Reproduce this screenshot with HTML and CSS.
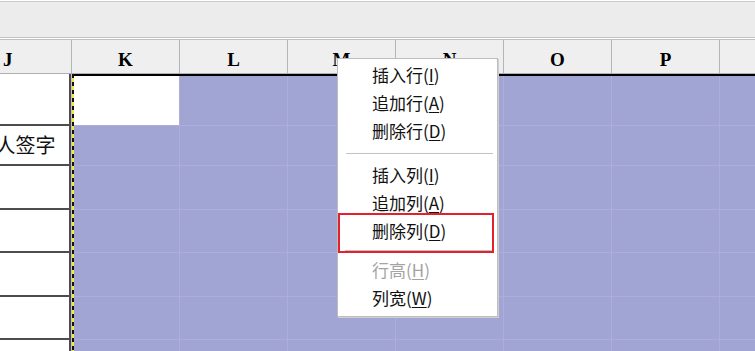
FILE: index.html
```html
<!DOCTYPE html>
<html lang="zh-CN">
<head>
  <meta charset="UTF-8" />
  <title>表格 • 列操作</title>
  <link rel="stylesheet" href="styles.css">
</head>
<body>
  <div class="toolbar"></div>

  <div class="view">
    <!-- column headers -->
    <div class="head">
      <div class="hcell hcell-j">J</div>
      <div class="hcell">K</div>
      <div class="hcell">L</div>
      <div class="hcell">M</div>
      <div class="hcell">N</div>
      <div class="hcell">O</div>
      <div class="hcell">P</div>
      <div class="hcell"></div>
    </div>

    <div class="sheet">
      <div class="col-j">
        <div class="jcell r1"></div>
        <div class="jcell r2">检验人签字</div>
        <div class="jcell r3"></div>
        <div class="jcell r4"></div>
        <div class="jcell r5"></div>
        <div class="jcell r6"></div>
        <div class="jcell r7"></div>
      </div>
      <div class="sel">
        <div class="grid" id="grid"></div>
      </div>
    </div>
  </div>

  <!-- context menu -->
  <div class="menu">
    <div class="item">插入行(<u>I</u>)</div>
    <div class="item">追加行(<u>A</u>)</div>
    <div class="item">删除行(<u>D</u>)</div>
    <div class="sep"></div>
    <div class="item">插入列(<u>I</u>)</div>
    <div class="item">追加列(<u>A</u>)</div>
    <div class="item">删除列(<u>D</u>)</div>
    <div class="sep sep-tight"></div>
    <div class="item disabled">行高(<u>H</u>)</div>
    <div class="item">列宽(<u>W</u>)</div>
    <div class="mark"></div>
  </div>

  <script>
    // fill the selected range: 7 columns x 7 rows, K1 is the active cell
    const grid = document.getElementById('grid');
    for (let r = 0; r < 7; r++) {
      for (let c = 0; c < 7; c++) {
        const d = document.createElement('div');
        d.className = (r === 0 && c === 0) ? 'cell active' : 'cell';
        grid.appendChild(d);
      }
    }
  </script>
</body>
</html>
```

FILE: styles.css
```css
:root {
  --bar-bg: #ececec;
  --head-bg: #efefef;
  --head-line: #b5b5b5;
  --sel-bg: #a1a5d3;
  --sel-line: #b1ace0;
  --cell-line: #4d4d4d;
  --menu-line: #bdbdbd;
  --mark: #e3202b;
}
* { box-sizing: border-box; margin: 0; padding: 0; }
html, body { width: 755px; height: 351px; overflow: hidden; }
body { background: #fff; font-family: "Noto Sans CJK SC", sans-serif; position: relative; }

.toolbar {
  margin-top: 1px;
  height: 37px;
  background: var(--bar-bg);
  border-top: 1px solid #cacaca;
  border-bottom: 1px solid #c2c2c2;
}

.view { margin-top: 1px; overflow: hidden; }

.head {
  display: grid;
  grid-template-columns: 130px repeat(7, 108px);
  margin-left: -58px;
  height: 35px;
  background: var(--head-bg);
  border-top: 1px solid #c0c0c0;
  border-bottom: 1px solid #b0b0b0;
}
.hcell {
  border-right: 1px solid var(--head-line);
  font-family: "Liberation Serif", serif;
  font-weight: bold;
  font-size: 19px;
  line-height: 20px;
  text-align: center;
  padding-top: 10px;
  color: #000;
}
.hcell-j { text-align: left; padding-left: 61px; }

.sheet { display: flex; margin-left: -58px; }
.col-j { width: 130px; flex: none; background: #c4c4c4; }
.jcell {
  width: 129px;
  background: #fff;
  border-right: 2px solid var(--cell-line);
  border-bottom: 2px solid var(--cell-line);
  font-size: 20px;
  color: #111;
  text-align: center;
  line-height: 38px;
  white-space: nowrap;
}
.r1 { height: 52px; }
.r2 { height: 40px; }
.r3 { height: 44px; }
.r4 { height: 43px; }
.r5 { height: 44px; }
.r6 { height: 43px; }
.r7 { height: 44px; }

.sel { flex: 1; position: relative; border-top: 2px solid #000; background: var(--sel-bg); }
.sel::before {
  content: "";
  position: absolute;
  left: 0; top: -2px; bottom: 0;
  width: 2px;
  background: repeating-linear-gradient(to bottom, #111 0 4px, #f5e83a 4px 8px);
  z-index: 2;
}
.grid {
  display: grid;
  grid-template-columns: repeat(7, 108px);
  grid-template-rows: 50px 40px 44px 43px 44px 43px 44px;
}
.cell { border-right: 1px solid var(--sel-line); border-bottom: 1px solid var(--sel-line); }
.cell.active { background: #fff; }

.menu {
  position: absolute;
  left: 337px; top: 58px;
  width: 161px;
  padding: 2px 0 4px;
  background: #fff;
  border: 1px solid var(--menu-line);
  box-shadow: 1px 1px 0 #cfcfcf;
  z-index: 10;
}
.item {
  height: 28px;
  line-height: 28px;
  padding-left: 34px;
  font-size: 17px;
  color: #111;
  white-space: nowrap;
}
.item u { text-underline-offset: 2px; }
.item.disabled { color: #a3a3a3; }
.sep { height: 1px; margin: 8px 4px 7px 8px; background: #c2c2c2; }
.sep-tight { margin: 5px 4px 5px 7px; }

/* annotation box over the chosen command */
.mark {
  position: absolute;
  left: 0; top: 154px;
  width: 156px; height: 40px;
  border: 2px solid var(--mark);
}
```
